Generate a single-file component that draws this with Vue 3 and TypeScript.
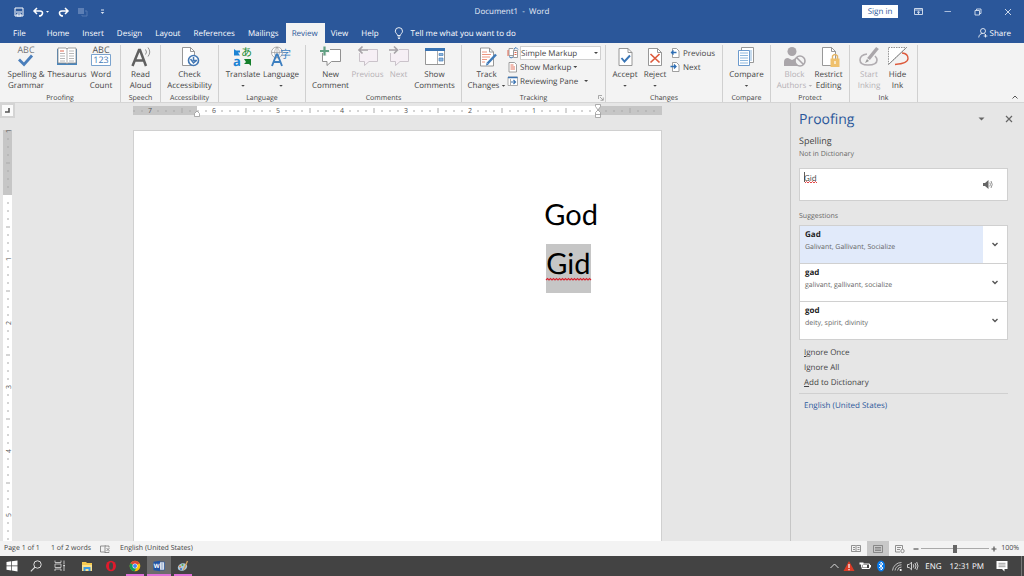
<script setup lang="ts">
import { ref } from 'vue'

const tabs: string[] = ['Home', 'Insert', 'Design', 'Layout', 'References', 'Mailings', 'Review', 'View', 'Help']
const activeTab = ref('Review')
const markup = ref('Simple Markup')
const word = ref('Gid')
const zoom = ref(50)

interface Suggestion {
  term: string
  synonyms: string
}
const suggestions: Suggestion[] = [
  { term: 'Gad', synonyms: 'Galivant, Gallivant, Socialize' },
  { term: 'gad', synonyms: 'galivant, gallivant, socialize' },
  { term: 'god', synonyms: 'deity, spirit, divinity' },
]
const selected = ref(0)

interface Tick {
  at: number
  label: string
  half: boolean
}
// Eighth-inch ticks, 64 units to the inch, counted away from the zero mark.
function makeTicks(zero: number, from: number, to: number): Tick[] {
  const list: Tick[] = []
  for (let at = from; at <= to; at += 8) {
    const n = Math.abs(at - zero)
    list.push({ at, label: n > 0 && n % 64 === 0 ? String(n / 64) : '', half: n % 64 === 32 })
  }
  return list.filter((t) => t.at !== zero)
}
const hTicks = makeTicks(465, 1, 521)
const vTicks = makeTicks(65, 1, 409)
</script>

<template>
  <div class="app">
    <header class="title-bar">
      <div class="quick">
        <button class="q-btn" aria-label="Save">
          <svg width="10" height="10" viewBox="0 0 10 10"><path d="M1 1h8v8H1z" fill="none" stroke="#fff" /><path d="M2 5h6M3 7h4v2H3z" stroke="#fff" fill="none" /></svg>
        </button>
        <button class="q-btn undo" aria-label="Undo">
          <svg width="16" height="10" viewBox="0 0 16 10"><path d="M4 1L1 4l3 3M1.500 4H7c4 0 3 5-1 5" fill="none" stroke="#fff" stroke-width="1.500" /><path d="M13 4h3l-1.500 1.700z" fill="#fff" /></svg>
        </button>
        <button class="q-btn" aria-label="Redo">
          <svg width="11" height="10" viewBox="0 0 11 10"><path d="M7 1l3 3-3 3M9.500 4H4C0 4 1 9 5 9" fill="none" stroke="#fff" stroke-width="1.500" /></svg>
        </button>
        <button class="q-btn" aria-label="Paste">
          <svg width="10" height="10" viewBox="0 0 10 10"><path d="M0 1h6v6H0z" fill="#5d7fb5" /><path d="M7 4h2v5H4V8" fill="none" stroke="#5578b0" /></svg>
        </button>
        <button class="q-btn" aria-label="Customize toolbar">
          <svg width="8" height="6" viewBox="0 0 8 6"><path d="M4 1h3" stroke="#dbe4f2" /><path d="M3.700 3h3.600L5.500 5z" fill="#dbe4f2" /></svg>
        </button>
      </div>
      <div class="doc-title">Document1&nbsp; -&nbsp; Word</div>
      <div class="window-buttons">
        <button class="sign-in">Sign in</button>
        <button class="w-btn" aria-label="Ribbon display options">
          <svg width="9" height="8" viewBox="0 0 9 8"><path d="M.5.5h8v6h-8zM.5 2h8M4.500 6V3.500M3 4.700l1.500-1.400L6 4.700" fill="none" stroke="#dbe4f2" stroke-width=".9" /></svg>
        </button>
        <button class="w-btn" aria-label="Minimize"><svg width="8" height="8" viewBox="0 0 8 8"><path d="M.5 3.500h6.500" stroke="#a9bcdb" /></svg></button>
        <button class="w-btn" aria-label="Restore"><svg width="8" height="8" viewBox="0 0 8 8"><path d="M1 2.500h4.500V7H1zM2.500 2.500V1H7v4.500H5.500" fill="none" stroke="#dbe4f2" stroke-width=".9" /></svg></button>
        <button class="w-btn" aria-label="Close"><svg width="8" height="8" viewBox="0 0 8 8"><path d="M1 1l6 6M7 1L1 7" stroke="#dbe4f2" stroke-width=".9" /></svg></button>
      </div>
    </header>

    <nav class="tabs">
      <button class="tab file">File</button>
      <button v-for="t in tabs" :key="t" class="tab" :class="{ active: t === activeTab }" @click="activeTab = t">{{ t }}</button>
      <button class="tell-me">
        <svg width="10" height="12" viewBox="0 0 10 12"><path d="M3.500 8.500C3.500 7 1.300 6 1.300 4.200a3.600 3.600 0 0 1 7.200 0C8.500 6 6.400 7 6.400 8.500zM3.700 10h2.600M4 11.400h2" fill="none" stroke="#fff" stroke-width=".9" /></svg>
        Tell me what you want to do
      </button>
      <button class="share">
        <svg width="10" height="10" viewBox="0 0 10 10"><circle cx="5" cy="3" r="2.500" fill="none" stroke="#fff" stroke-width=".8" /><path d="M.7 9.500C1 7 2.500 5.500 4.500 5.500M6.500 5.500L7 6.500M7.500 6v3.500M5.700 8h3.700" fill="none" stroke="#fff" stroke-width=".8" /></svg>
        Share
      </button>
    </nav>

    <section class="ribbon" aria-label="Review">
      <div class="group proofing">
        <div class="tools">
          <button class="tool">
            <svg width="22" height="22" viewBox="0 0 22 22"><text x="11" y="7" text-anchor="middle" class="abc" fill="#777">ABC</text><path d="M4 13.500l5 5 8-9" fill="none" stroke="#4a7ebb" stroke-width="2.800" /></svg>
            <span>Spelling &amp;<br />Grammar</span>
          </button>
          <button class="tool">
            <svg width="22" height="22" viewBox="0 0 22 22"><path d="M1 3h20v16H1z" fill="#4a86bd" /><path d="M2 2h8l1 1 1-1h8v15h-8l-1 1-1-1H2z" fill="#fff" stroke="#888" stroke-width=".8" /><path d="M11 3v14" stroke="#999" stroke-width=".8" /><path d="M4 5h4" stroke="#e0654c" /><path d="M4 7.500h5M4 10h5M4 12.500h5M4 15h5M13 5h5M13 7.500h5M13 10h5M13 12.500h5M13 15h5" stroke="#a6a6a6" stroke-width=".8" /></svg>
            <span>Thesaurus</span>
          </button>
          <button class="tool">
            <svg width="22" height="22" viewBox="0 0 22 22"><text x="11" y="7" text-anchor="middle" class="abc" fill="#555">ABC</text><path d="M1.500 8.500h19v11h-19z" fill="#fff" stroke="#7ba3ce" /><text x="11" y="17" text-anchor="middle" class="abc" fill="#3f78b5">123</text></svg>
            <span>Word<br />Count</span>
          </button>
        </div>
        <div class="group-name">Proofing</div>
      </div>

      <div class="group speech">
        <div class="tools">
          <button class="tool">
            <svg width="22" height="22" viewBox="0 0 22 22"><path d="M2.500 20L9 4h1l6 16M5 14.500h8.500" fill="none" stroke="#606060" stroke-width="2.500" /><path d="M15.500 3.500q2 2.500 0 5M18 1.500q3.500 4.500 0 9" fill="none" stroke="#888" stroke-width=".9" /></svg>
            <span>Read<br />Aloud</span>
          </button>
        </div>
        <div class="group-name">Speech</div>
      </div>

      <div class="group access">
        <div class="tools">
          <button class="tool">
            <svg width="22" height="22" viewBox="0 0 22 22"><path d="M4.500 1.500h8l4 4v14h-12z" fill="#fff" stroke="#8c8c8c" stroke-width=".9" /><path d="M12.500 1.500v4h4" fill="none" stroke="#8c8c8c" stroke-width=".9" /><circle cx="15.500" cy="14.500" r="5" fill="#fff" stroke="#4277b3" stroke-width="1.600" /><path d="M15.500 11v3.500h3.500M12.500 13l3 4 3-2.500" fill="none" stroke="#4277b3" stroke-width="1.500" /></svg>
            <span>Check<br />Accessibility</span>
          </button>
        </div>
        <div class="group-name">Accessibility</div>
      </div>

      <div class="group language">
        <div class="tools">
          <button class="tool">
            <svg width="22" height="22" viewBox="0 0 22 22"><text x="1" y="20" class="glyph-a" fill="#1c83d4">a</text><text x="9" y="10" class="cjk" fill="#138a2e">あ</text><path d="M2 3l2 1.500h4v2H6l2 3H2z" fill="#1c83d4" /><path d="M12 13h7v7l-2-2h-5l2-2z" fill="#16802c" /></svg>
            <span>Translate<br /><i class="caret"></i></span>
          </button>
          <button class="tool">
            <svg width="22" height="22" viewBox="0 0 22 22"><circle cx="7" cy="6.500" r="5.500" fill="#fff" stroke="#999" stroke-width=".8" /><path d="M1.500 6.500h11M7 1v11M7 1q-5 5.500 0 11M7 1q5 5.500 0 11" fill="none" stroke="#999" stroke-width=".7" /><path d="M2 20L6.500 8.500h1L12 20M4 16h6" fill="none" stroke="#3d7fc0" stroke-width="1.900" /><text x="10" y="12" class="cjk" fill="#3d7fc0">字</text></svg>
            <span>Language<br /><i class="caret"></i></span>
          </button>
        </div>
        <div class="group-name">Language</div>
      </div>

      <div class="group comments">
        <div class="tools">
          <button class="tool">
            <svg width="22" height="22" viewBox="0 0 22 22"><path d="M2.500 3.500h18v12h-9L7 19.500v-4H2.500z" fill="#fff" stroke="#858585" stroke-width=".9" /><path d="M0 5h10M5 0v10" stroke="#f3f3f3" stroke-width="4" /><path d="M0 5h9M4.500 .5v9" stroke="#62a083" stroke-width="2.200" /></svg>
            <span>New<br />Comment</span>
          </button>
          <button class="tool" disabled>
            <svg width="22" height="22" viewBox="0 0 22 22"><path d="M2.500 3.500h18v12H12l-4.500 4v-4h-5z" fill="#f6eff5" stroke="#c5bdc5" stroke-width=".9" /><path d="M0 4h11" stroke="#f3f3f3" stroke-width="6" /><path d="M11 4H2M5.500 .5L2 4l3.500 3.500" fill="none" stroke="#a8a3a8" stroke-width="1.700" /></svg>
            <span>Previous</span>
          </button>
          <button class="tool" disabled>
            <svg width="22" height="22" viewBox="0 0 22 22"><path d="M2.500 3.500h18v12H12l-4.500 4v-4h-5z" fill="#f6eff5" stroke="#c5bdc5" stroke-width=".9" /><path d="M0 4h11" stroke="#f3f3f3" stroke-width="6" /><path d="M1 4h9M6 .5L9.500 4 6 7.500" fill="none" stroke="#a8a3a8" stroke-width="1.700" /></svg>
            <span>Next</span>
          </button>
          <button class="tool">
            <svg width="22" height="22" viewBox="0 0 22 22"><path d="M1.500 2.500h19v16h-19z" fill="#fff" stroke="#8a8a8a" stroke-width=".9" /><path d="M1 2h20v3H1z" fill="#3a73b2" /><path d="M13.500 5v13" stroke="#999" stroke-width=".8" /><path d="M15 7.500h4v2h-4zM15 12h4v3h-4z" fill="#8db5dc" stroke="#4a82bd" stroke-width=".7" /></svg>
            <span>Show<br />Comments</span>
          </button>
        </div>
        <div class="group-name">Comments</div>
      </div>

      <div class="group tracking">
        <div class="tools">
          <button class="tool">
            <svg width="22" height="22" viewBox="0 0 22 22"><path d="M4.500 2h9l4 4v14h-13z" fill="#fff" stroke="#8c8c8c" stroke-width=".9" /><path d="M13.500 2v4h4" fill="none" stroke="#8c8c8c" stroke-width=".9" /><path d="M6 6h5M6 8.500h9M6 11h8M6 13.500h5M6 16h3" stroke="#ec8a72" stroke-width=".9" /><path d="M20 8.500l-8.500 9" stroke="#3f7ab8" stroke-width="2.500" /><path d="M10 19.500l.6-2.800 2 2z" fill="#3f7ab8" /></svg>
            <span>Track<br />Changes <i class="caret"></i></span>
          </button>
          <div class="stack">
            <div class="row combo">
              <svg width="12" height="12" viewBox="0 0 12 12"><path d="M2 1.500h4l1 1v6H2z" fill="#fff" stroke="#888" stroke-width=".8" /><path d="M6.500 3.500h4v7h-4z" fill="#fff" stroke="#888" stroke-width=".8" /><path d="M1 3v6M7.500 5.500h2M7.500 7.500h2" stroke="#e0654c" /><path d="M7 2l2-1.500 2 2M2 9.500l2 1.500 2-1" fill="none" stroke="#3f7ab8" /></svg>
              <select v-model="markup" aria-label="Display for review">
                <option>Simple Markup</option>
                <option>All Markup</option>
              </select>
              <i class="caret over"></i>
            </div>
            <button class="row">
              <svg width="12" height="12" viewBox="0 0 12 12"><path d="M2 1.500h5.500l2 2v7.500H2z" fill="#fff" stroke="#888" stroke-width=".8" /><path d="M3.500 4h3M3.500 6h4.500M3.500 8h4.500" stroke="#e0654c" stroke-width=".9" /></svg>
              Show Markup<i class="caret"></i>
            </button>
            <button class="row">
              <svg width="12" height="12" viewBox="0 0 12 12"><path d="M1 2h9.500v8.500H1z" fill="#fff" stroke="#999" stroke-width=".8" /><path d="M1 2.500h9.500" stroke="#3a73b2" stroke-width="1.500" /><path d="M3.500 4v6" stroke="#888" stroke-width=".7" /><path d="M4 7h4.500M6.500 5l2 2-2 2" fill="none" stroke="#3a73b2" stroke-width="1.200" /></svg>
              Reviewing Pane<i class="caret far"></i>
            </button>
          </div>
        </div>
        <div class="group-name">Tracking</div>
        <button class="launcher" aria-label="Tracking options"><svg width="6" height="6" viewBox="0 0 6 6"><path d="M.5 4V.5H4M2 2l3 3M5.300 2.500v2.800H2.500" fill="none" stroke="#888" stroke-width=".7" /></svg></button>
      </div>

      <div class="group changes">
        <div class="tools">
          <button class="tool">
            <svg width="22" height="22" viewBox="0 0 22 22"><path d="M5 2.500h9l4 4v13H5z" fill="#fff" stroke="#8c8c8c" stroke-width=".9" /><path d="M14 2.500v4h4" fill="none" stroke="#8c8c8c" stroke-width=".9" /><path d="M7.500 12l3 3.500 5.500-6" fill="none" stroke="#3a76b6" stroke-width="1.900" /></svg>
            <span>Accept<br /><i class="caret"></i></span>
          </button>
          <button class="tool">
            <svg width="22" height="22" viewBox="0 0 22 22"><path d="M4.500 2.500h9l4 4v13h-13z" fill="#fff" stroke="#8c8c8c" stroke-width=".9" /><path d="M13.500 2.500v4h4" fill="none" stroke="#8c8c8c" stroke-width=".9" /><path d="M6.500 8l9 8.500M15.500 8l-9 8.500" fill="none" stroke="#dd5a3c" stroke-width="1.700" /></svg>
            <span>Reject<br /><i class="caret"></i></span>
          </button>
          <div class="stack">
            <button class="row">
              <svg width="12" height="12" viewBox="0 0 12 12"><path d="M2.500 1.500h4l2.500 2.500v6.500H2.500z" fill="#fff" stroke="#888" stroke-width=".8" /><path d="M6.500 5.500H1.500M3.500 3.500l-2 2 2 2" fill="none" stroke="#2f6fb5" stroke-width="1.300" /></svg>
              Previous
            </button>
            <button class="row">
              <svg width="12" height="12" viewBox="0 0 12 12"><path d="M2.500 1.500h4l2.500 2.500v6.500H2.500z" fill="#fff" stroke="#888" stroke-width=".8" /><path d="M.5 5.500h5.500M4 3.500l2 2-2 2" fill="none" stroke="#2f6fb5" stroke-width="1.300" /></svg>
              Next
            </button>
          </div>
        </div>
        <div class="group-name">Changes</div>
      </div>

      <div class="group compare">
        <div class="tools">
          <button class="tool">
            <svg width="22" height="22" viewBox="0 0 22 22"><path d="M6.500 1.500h12v15h-12z" fill="#fff" stroke="#8c8c8c" stroke-width=".9" /><path d="M3.500 4.500h11v15h-11z" fill="#fff" stroke="#5b8fc7" stroke-width=".9" /><path d="M5 7h8M5 9.500h8M5 12h8M5 14.500h8M5 17h8M16 4v11" stroke="#8fb8de" stroke-width="1" /></svg>
            <span>Compare<br /><i class="caret"></i></span>
          </button>
        </div>
        <div class="group-name">Compare</div>
      </div>

      <div class="group protect">
        <div class="tools">
          <button class="tool" disabled>
            <svg width="22" height="22" viewBox="0 0 22 22"><circle cx="8" cy="5.500" r="4.500" fill="#aaa6aa" /><path d="M0 20v-4q0-4 4-4l4 2 4-2q3 0 3 3v5z" fill="#aaa6aa" /><circle cx="16" cy="15" r="5" fill="#f3f3f3" stroke="#aaa6aa" stroke-width="1.600" /><path d="M12.500 11.500l7 7" stroke="#aaa6aa" stroke-width="1.600" /></svg>
            <span>Block<br />Authors <i class="caret"></i></span>
          </button>
          <button class="tool">
            <svg width="22" height="22" viewBox="0 0 22 22"><path d="M4.500 1.500h9l4 4v14h-13z" fill="#fff" stroke="#8c8c8c" stroke-width=".9" /><path d="M13.500 1.500v4h4" fill="none" stroke="#8c8c8c" stroke-width=".9" /><path d="M14.500 13v-3q2.500-3 5 0v3" fill="none" stroke="#e5b564" stroke-width="1.400" /><path d="M12.500 12.500h9V21h-9z" fill="#efc06c" /><path d="M17 15v3" stroke="#fff" stroke-width="1.200" /></svg>
            <span>Restrict<br />Editing</span>
          </button>
        </div>
        <div class="group-name">Protect</div>
      </div>

      <div class="group ink">
        <div class="tools">
          <button class="tool" disabled>
            <svg width="22" height="22" viewBox="0 0 22 22"><path d="M9 8Q2 9 2 14q0 5 8 5 9 0 9-5 0-2-2-4" fill="none" stroke="#b0acb0" stroke-width="1.600" /><path d="M19.500 2l-9 11" stroke="#aaa6aa" stroke-width="3.500" /><path d="M7 17l2-4 2 2z" fill="#999" /></svg>
            <span>Start<br />Inking</span>
          </button>
          <button class="tool">
            <svg width="22" height="22" viewBox="0 0 22 22"><path d="M1.500 1.500h18l-18 17z" fill="#fff" stroke="#777" stroke-width=".8" stroke-dasharray="1.500 1" /><path d="M19.500 1.500l-18 17" stroke="#777" stroke-width=".8" /><path d="M15 7q6 .5 6 5.500 0 5-13 6" fill="none" stroke="#dd5a3c" stroke-width="1.400" /></svg>
            <span>Hide<br />Ink</span>
          </button>
        </div>
        <div class="group-name">Ink</div>
      </div>
      <button class="collapse" aria-label="Collapse ribbon"><svg width="6" height="4" viewBox="0 0 6 4"><path d="M.5 3.500L3 1l2.500 2.500" fill="none" stroke="#555" /></svg></button>
    </section>

    <div class="work">
      <main class="editor">
        <div class="ruler-row">
          <button class="tab-stop" aria-label="Tab stop"><svg width="5" height="5" viewBox="0 0 5 5"><path d="M4 0v4H0" fill="none" stroke="#555" stroke-width="1.600" /></svg></button>
          <svg class="h-ruler" width="529" height="15" viewBox="0 0 529 15">
            <path d="M0 3h529v9H0z" fill="#c6c6c6" />
            <path d="M64 3h401v9H64z" fill="#fff" />
            <template v-for="t in hTicks" :key="t.at">
              <text v-if="t.label" :x="t.at" y="10" text-anchor="middle" class="num">{{ t.label }}</text>
              <path v-else :d="`M${t.at} ${t.half ? 5 : 7}v${t.half ? 5 : 2}`" stroke="#aaa" />
            </template>
            <path d="M61.500 13.500v-3L64 8l2.500 2.500v3zM462.500 3.500v-2h5v2L465 7zM462.500 9.500L465 7l2.500 2.500v5h-5zM462.500 11.500h5" fill="#fff" stroke="#999" stroke-width=".8" />
          </svg>
        </div>
        <div class="canvas">
          <svg class="v-ruler" width="9" height="411" viewBox="0 0 9 411">
            <path d="M0 0h9v411H0z" fill="#fff" />
            <path d="M0 0h9v65H0z" fill="#c6c6c6" />
            <template v-for="t in vTicks" :key="t.at">
              <text v-if="t.label" :transform="`translate(8 ${t.at}) rotate(-90)`" text-anchor="middle" class="num">{{ t.label }}</text>
              <path v-else :d="`M${t.half ? 3 : 4} ${t.at}h${t.half ? 4 : 2}`" stroke="#aaa" />
            </template>
          </svg>
          <article class="page">
            <p>God</p>
            <p><span class="picked">Gid<svg class="squiggle" width="45" height="3" viewBox="0 0 45 3"><path d="M0 2l1.500-1.500L3 2l1.500-1.500L6 2l1.500-1.500L9 2l1.500-1.500L12 2l1.500-1.500L15 2l1.500-1.500L18 2l1.500-1.500L21 2l1.500-1.500L24 2l1.500-1.500L27 2l1.500-1.500L30 2l1.500-1.500L33 2l1.500-1.500L36 2l1.500-1.500L39 2l1.500-1.500L42 2l1.500-1.500L45 2" fill="none" stroke="#d8232f" stroke-width="1.100" /></svg></span>&nbsp;</p>
          </article>
        </div>
      </main>

      <aside class="pane">
        <div class="pane-head">
          <h2>Proofing</h2>
          <button aria-label="Pane options"><svg width="7" height="4" viewBox="0 0 7 4"><path d="M.5.5h6l-3 3z" fill="#666" /></svg></button>
          <button aria-label="Close pane"><svg width="8" height="8" viewBox="0 0 8 8"><path d="M1 1l6 6M7 1L1 7" stroke="#666" stroke-width="1.200" /></svg></button>
        </div>
        <h3>Spelling</h3>
        <label class="hint" for="word">Not in Dictionary</label>
        <div class="word-box">
          <div class="word-field">
            <input id="word" v-model="word" type="text" />
            <svg class="word-mark" width="13" height="12" viewBox="0 0 13 12"><path d="M.5 0v10" stroke="#333" stroke-width=".8" /><path d="M1 11l1.500-1.500L4 11l1.500-1.500L7 11l1.500-1.500L10 11l1.500-1.500L13 11" fill="none" stroke="#e03030" stroke-width=".9" /></svg>
          </div>
          <button class="speak" aria-label="Read word aloud"><svg width="11" height="9" viewBox="0 0 11 9"><path d="M0 3h2l3.500-3v9L2 6H0z" fill="#666" /><path d="M6.800 2.500q1.200 2 0 4M8 1q2.500 3.500 0 7" fill="none" stroke="#888" stroke-width=".9" /></svg></button>
        </div>
        <div class="hint">Suggestions</div>
        <ul class="suggestions">
          <li v-for="(s, i) in suggestions" :key="s.term" :class="{ on: i === selected }">
            <button class="pick" @click="selected = i"><b>{{ s.term }}</b><span>{{ s.synonyms }}</span></button>
            <button class="more" :aria-label="`More for ${s.term}`"><svg width="6" height="5" viewBox="0 0 6 5"><path d="M.5 1L3 3.500 5.500 1" fill="none" stroke="#555" stroke-width="1.400" /></svg></button>
          </li>
        </ul>
        <div class="actions">
          <button><u>I</u>gnore Once</button>
          <button>I<u>g</u>nore All</button>
          <button><u>A</u>dd to Dictionary</button>
        </div>
        <a class="lang" href="#language">English (United States)</a>
      </aside>
    </div>

    <footer class="status">
      <span class="pages">Page 1 of 1</span>
      <span class="words">1 of 2 words</span>
      <svg class="book" width="10" height="8" viewBox="0 0 10 8"><path d="M4.500 1H.5v6h4l.5.700V.500zM5 1h4v1.500M5 7.500h4V6.500M6.500 3l3 3M9.500 3l-3 3" fill="none" stroke="#777" stroke-width=".8" /></svg>
      <span>English (United States)</span>
      <div class="views">
        <button aria-label="Read mode"><svg width="10" height="8" viewBox="0 0 10 8"><path d="M.5.500h4l.5.500.5-.500h4v6h-4L5 7l-.5-.500h-4zM5 1v6M2 2.500h2M2 4.500h2M6.500 2.500h2M6.500 4.500h2" fill="none" stroke="#777" stroke-width=".8" /></svg></button>
        <button class="on" aria-label="Print layout"><svg width="10" height="8" viewBox="0 0 10 8"><path d="M.5.500h9v7h-9zM2 2.500h6M2 4h6M2 5.500h6" fill="none" stroke="#777" stroke-width=".8" /></svg></button>
        <button aria-label="Web layout"><svg width="10" height="8" viewBox="0 0 10 8"><path d="M5 7H.5V.500h7V4M2 2.500h4M2 4.500h3" fill="none" stroke="#777" stroke-width=".8" /><circle cx="7.500" cy="6" r="1.700" fill="none" stroke="#777" stroke-width=".8" /></svg></button>
      </div>
      <button class="zoom-btn" aria-label="Zoom out"><svg width="6" height="6" viewBox="0 0 6 6"><path d="M.5 3h5" stroke="#555" stroke-width="1.200" /></svg></button>
      <input v-model="zoom" class="zoom" type="range" min="0" max="100" aria-label="Zoom" />
      <button class="zoom-btn" aria-label="Zoom in"><svg width="6" height="6" viewBox="0 0 6 6"><path d="M.5 3h5M3 .5v5" stroke="#555" stroke-width="1.200" /></svg></button>
      <span class="percent">100%</span>
    </footer>

    <div class="taskbar">
      <button aria-label="Start"><svg width="12" height="12" viewBox="0 0 12 12"><path d="M.5 2l4.700-.700v4.200H.5zM5.900 1.200L11.500.500v5H5.900zM.5 6.200h4.700v4.300L.5 9.800zM5.900 6.200h5.600v5.200l-5.600-.800z" fill="#fff" /></svg></button>
      <button aria-label="Search"><svg width="12" height="12" viewBox="0 0 12 12"><circle cx="7.500" cy="4.500" r="3.700" fill="none" stroke="#ddd" /><path d="M5 7.200L.8 11.400" stroke="#ddd" stroke-width="1.200" /></svg></button>
      <button aria-label="Task view"><svg width="12" height="12" viewBox="0 0 12 12"><path d="M1 .5v2h6v-2M1 11V9h6v2M1 4h6v3.500H1zM10 .5v4M10 7v4" fill="none" stroke="#ccc" stroke-width=".9" /><path d="M9.300 5h1.500v1.500H9.300z" fill="#fff" /></svg></button>
      <button class="first-app" aria-label="File Explorer"><svg width="12" height="10" viewBox="0 0 12 10"><path d="M1 1h4l1 1h5v8H1z" fill="#f5c94f" /><path d="M1 4h10v6H1z" fill="#fbe08c" /><path d="M2.500 6h7v4h-2V8h-3v2h-2z" fill="#3e9adf" /></svg></button>
      <button aria-label="Opera"><svg width="12" height="12" viewBox="0 0 12 12"><ellipse cx="6" cy="6" rx="5" ry="5.200" fill="#e01b2c" /><ellipse cx="6" cy="6" rx="2" ry="3.700" fill="#444" /></svg></button>
      <button class="open" aria-label="Chrome"><svg width="12" height="12" viewBox="0 0 12 12"><circle cx="6" cy="6" r="5.300" fill="#f4c20d" /><path d="M6 6L1.400 3.300A5.300 5.300 0 0 1 10.600 3.300z" fill="#db4437" /><path d="M6 6L1.400 3.300A5.300 5.300 0 0 0 5.500 11.300L8 7z" fill="#109d58" /><circle cx="6" cy="6" r="2.500" fill="#fff" /><circle cx="6" cy="6" r="2" fill="#4285f4" /></svg></button>
      <button class="open current" aria-label="Word"><svg width="12" height="12" viewBox="0 0 12 12"><path d="M6 2h5.500v8H6z" fill="#fff" stroke="#2b579a" stroke-width=".8" /><path d="M7.500 4h3M7.500 6h3M7.500 8h3" stroke="#2b579a" stroke-width=".7" /><path d="M.5 1.700L7 .7v10.600L.5 10.300z" fill="#1f54a5" /><text x="3.700" y="8" text-anchor="middle" class="w-mark" fill="#fff">W</text></svg></button>
      <button class="open" aria-label="Paint"><svg width="12" height="12" viewBox="0 0 12 12"><ellipse cx="5.500" cy="7" rx="4.800" ry="3.700" fill="#a9c9de" transform="rotate(-20 5.500 7)" /><circle cx="3" cy="6.500" r="1" fill="#e8823a" /><circle cx="5.500" cy="5" r="1" fill="#5aa845" /><circle cx="4" cy="9" r="1" fill="#3b68b8" /><path d="M10.500 1L6.500 10" stroke="#d2a15a" stroke-width="1.300" /></svg></button>

      <div class="tray">
        <svg width="9" height="12" viewBox="0 0 9 12"><path d="M.5 8l4-4 4 4" fill="none" stroke="#ddd" /></svg>
        <svg width="12" height="12" viewBox="0 0 12 12"><path d="M6 1l5.500 10H.5z" fill="#dc3b26" /><path d="M6 4v4M6 9v1.300" stroke="#fff" stroke-width="1.200" /></svg>
        <svg width="12" height="12" viewBox="0 0 12 12"><path d="M3 4h7.500v4.500H3zM11.500 5v2.500" fill="none" stroke="#fff" /><path d="M4 5h4v2.500H4zM.5 2.500h4v2h-4z" fill="#fff" /><path d="M2.500 4v3" stroke="#fff" stroke-width=".8" /></svg>
        <svg width="12" height="12" viewBox="0 0 12 12"><ellipse cx="6" cy="6" rx="4" ry="5.500" fill="#0a7bea" /><path d="M4 4l4 4-2 2V2l2 2-4 4" fill="none" stroke="#fff" stroke-width=".9" /></svg>
        <svg width="12" height="12" viewBox="0 0 12 12"><path d="M1.500 10.500a9 9 0 0 1 9-8M4 10.500a6.500 6.500 0 0 1 6.500-5.700M6.500 10.500A4 4 0 0 1 10.500 7" fill="none" stroke="#ccc" stroke-width=".9" /><circle cx="9.700" cy="10" r="1.100" fill="#fff" /></svg>
        <svg width="12" height="12" viewBox="0 0 12 12"><path d="M.5 4.500h1.700l2.300-2.300v7.600L2.200 7.500H.5zM6.300 4.300q1 1.700 0 3.400M8 3q2 3 0 6M9.700 2q2.600 4 0 8" fill="none" stroke="#ddd" stroke-width=".9" /></svg>
        <span class="eng">ENG</span>
        <time>12:31 PM</time>
        <svg class="notice" width="12" height="12" viewBox="0 0 12 12"><path d="M.5 1h11v8H8.500v2.500L6 9H.5z" fill="#fff" /><path d="M2.500 3.300h7M2.500 5h7M2.500 6.700h7" stroke="#777" stroke-width=".7" /></svg>
        <i class="peek"></i>
      </div>
    </div>
  </div>
</template>

<style>
body {
  margin: 0;
}
</style>

<style scoped>
* {
  box-sizing: border-box;
}
.app {
  display: flex;
  flex-direction: column;
  height: 100vh;
  overflow: hidden;
  font: 8px/11px "Open Sans", "Noto Sans", sans-serif;
  text-rendering: geometricPrecision;
  color: #444;
  background: #e6e6e6;
}
button,
input,
select {
  font: inherit;
  text-rendering: inherit;
  color: inherit;
  background: none;
  border: 0;
  padding: 0;
  margin: 0;
}
svg {
  display: block;
  flex: none;
  overflow: visible;
}

.title-bar {
  display: grid;
  grid-template-columns: 1fr auto 1fr;
  align-items: center;
  height: 23px;
  background: #2b579a;
  color: #fff;
}
.quick {
  display: flex;
  align-items: center;
  gap: 9px;
  padding-left: 14px;
}
.doc-title {
  color: #e6edf7;
}
.window-buttons {
  display: flex;
  justify-content: flex-end;
  align-items: center;
  padding-right: 1px;
}
.sign-in {
  width: 36px;
  height: 13px;
  margin-right: 5px;
  background: #fff;
  color: #2b579a;
}
.w-btn {
  display: flex;
  justify-content: center;
  width: 30px;
}

.tabs {
  display: flex;
  height: 20px;
  background: #2b579a;
  color: #fff;
}
.tab {
  padding: 0 7px 0 6px;
}
.file {
  padding: 0 15px 0 13px;
}
.tab.active {
  background: #f3f3f3;
  color: #2b579a;
}
.tell-me {
  display: flex;
  align-items: center;
  gap: 7px;
  margin-left: 8px;
}
.share {
  display: flex;
  align-items: center;
  gap: 2px;
  margin-left: auto;
  padding-right: 13px;
}

.ribbon {
  display: flex;
  height: 60px;
  background: #f3f3f3;
  border-bottom: 1px solid #d5d5d5;
}
.group {
  position: relative;
  display: flex;
  flex-direction: column;
  justify-content: space-between;
  margin-top: 2px;
  border-right: 1px solid #d0d0d0;
}
.tools {
  display: grid;
  justify-content: center;
  padding-top: 1px;
}
.proofing { width: 121px; }
.proofing .tools { grid-template-columns: 42px 40px 28px; }
.speech { width: 40px; }
.access { width: 58px; }
.language { width: 87px; }
.language .tools { grid-template-columns: 38px 38px; }
.comments { width: 156px; }
.comments .tools { grid-template-columns: 40px 34px 28px 44px; }
.tracking { width: 144px; }
.tracking .tools { grid-template-columns: 41px 94px; }
.changes { width: 117px; }
.changes .tools { grid-template-columns: 30px 30px 48px; }
.compare { width: 48px; }
.protect { width: 79px; }
.protect .tools { grid-template-columns: 37px 31px; }
.ink { width: 68px; }
.ink .tools { grid-template-columns: 28px 29px; }
.tool {
  display: flex;
  flex-direction: column;
  align-items: center;
  gap: 1px;
  white-space: nowrap;
}
.tool:disabled {
  color: #b5b1b5;
}
.group-name {
  text-align: center;
  font-size: 7px;
  line-height: 7px;
}
.caret {
  display: inline-block;
  width: 4px;
  height: 2px;
  background: currentColor;
  clip-path: polygon(0 0, 100% 0, 50% 100%);
  vertical-align: middle;
}
.stack {
  display: flex;
  flex-direction: column;
}
.row {
  position: relative;
  display: flex;
  align-items: center;
  gap: 1px;
  height: 14px;
  white-space: nowrap;
}
.row .caret {
  margin-left: 1px;
}
.row .far {
  margin-left: 5px;
}
.combo select {
  flex: 1;
  height: 14px;
  appearance: none;
  background: #fff;
  border: 1px solid #d0d0d0;
}
.row .over {
  position: absolute;
  right: 3px;
}
.launcher {
  position: absolute;
  right: 1px;
  bottom: 1px;
}
.collapse {
  align-self: flex-end;
  margin-left: auto;
  padding: 0 6px 3px;
}
.abc { font: 9px "Open Sans", sans-serif; }
.glyph-a { font: bold 13px "Open Sans", sans-serif; }
.cjk { font: 11px "Noto Sans CJK JP", sans-serif; }
.num { font: 7px "Open Sans", sans-serif; fill: #555; }
.w-mark { font: bold 6px "Open Sans", sans-serif; }

.work {
  display: flex;
  flex: 1;
  min-height: 0;
}
.editor {
  display: flex;
  flex-direction: column;
  flex: 1;
  min-width: 0;
}
.ruler-row {
  display: flex;
  padding-right: 10px;
}
.tab-stop {
  display: grid;
  place-items: center;
  width: 15px;
  height: 15px;
  background: #fafafa;
  border: 2px solid #d4d4d4;
}
.h-ruler {
  margin: 0 auto;
}
.canvas {
  display: flex;
  flex: 1;
  min-height: 0;
  padding: 12px 7px 0 3px;
  overflow: hidden;
}
.page {
  width: 529px;
  margin: 0 auto;
  padding: 64px 63px 0;
  background: #fff;
  border: 1px solid #d0d0d0;
  border-bottom: 0;
  color: #000;
  font: 29px/39px Lato, sans-serif;
  text-align: right;
}
.page p {
  margin: 0 0 10px;
  height: 39px;
}
.picked {
  position: relative;
  display: inline-block;
  padding-bottom: 10px;
  background: #c6c6c6;
}
.squiggle {
  position: absolute;
  left: 0;
  top: 34px;
}

.pane {
  width: 234px;
  padding: 4px 16px 0 8px;
  border-left: 1px solid #c6c6c6;
}
.pane-head {
  display: flex;
  align-items: center;
  height: 24px;
  gap: 20px;
  margin-right: -5px;
}
h2 {
  flex: 1;
  margin: 0;
  font-size: 14px;
  font-weight: 400;
  color: #2b579a;
}
h3 {
  margin: 3px 0;
  font-size: 9px;
  line-height: 13px;
  font-weight: 400;
}
.hint {
  display: block;
  font-size: 7px;
  line-height: 9px;
  color: #666;
}
.word-box {
  display: flex;
  align-items: center;
  justify-content: space-between;
  height: 33px;
  margin: 9px 0 11px;
  padding: 3px 13px 3px 4px;
  background: #fff;
  border: 1px solid #d0d0d0;
}
.word-field {
  position: relative;
  flex: 1;
  align-self: flex-start;
}
.word-field input {
  display: block;
  width: 100%;
  height: 12px;
}
.word-mark {
  position: absolute;
  left: 0;
  top: 0;
}
.suggestions {
  list-style: none;
  margin: 4px 0 0;
  padding: 0;
  background: #fff;
  border: 1px solid #d0d0d0;
}
li {
  display: flex;
  height: 37px;
}
li + li {
  height: 38px;
  border-top: 1px solid #d0d0d0;
}
.pick {
  display: flex;
  flex-direction: column;
  flex: 1;
  padding: 2px 0 0 5px;
  text-align: left;
}
.on .pick {
  background: #e1eafa;
}
.pick b {
  color: #222;
  line-height: 14px;
}
.pick span {
  font-size: 7px;
  color: #666;
}
.more {
  display: grid;
  place-items: center;
  width: 24px;
}
.actions {
  display: flex;
  flex-direction: column;
  align-items: flex-start;
  padding: 5px 5px 3px;
  border-bottom: 1px solid #d0d0d0;
}
.actions button {
  line-height: 15px;
}
.lang {
  display: block;
  padding: 6px 5px;
  color: #2b579a;
  text-decoration: none;
}

.status {
  display: flex;
  align-items: center;
  height: 15px;
  padding: 0 5px 0 4px;
  background: #f3f3f3;
  font-size: 7px;
}
.pages {
  width: 47px;
}
.words {
  width: 49px;
}
.book {
  margin-right: 10px;
}
.views {
  display: flex;
  align-self: stretch;
  margin-left: auto;
}
.views button {
  display: grid;
  place-items: center;
  width: 22px;
}
.views .on {
  background: #c8c8c8;
}
.zoom-btn {
  margin-left: 2px;
}
.zoom {
  appearance: none;
  width: 68px;
  height: 9px;
  margin: 0 0 0 2px;
  background: linear-gradient(#aaa, #aaa) center / 100% 1px no-repeat;
}
.zoom::-webkit-slider-thumb {
  appearance: none;
  width: 4px;
  height: 8px;
  background: #666;
}
.percent {
  width: 22px;
  text-align: right;
}

.taskbar {
  display: flex;
  height: 20px;
  background: #434343;
  color: #fff;
}
.taskbar button {
  display: grid;
  place-items: center;
  width: 24px;
}
.taskbar .first-app {
  margin-left: 3px;
}
.taskbar .open {
  background: linear-gradient(#e070d8, #e070d8) bottom / 18px 2px no-repeat;
}
.taskbar .current {
  background: linear-gradient(#e070d8, #e070d8) bottom / 24px 2px no-repeat #6c6c6c;
}
.tray {
  display: flex;
  align-items: center;
  gap: 4px;
  margin-left: auto;
}
.eng {
  margin-left: 2px;
}
time {
  margin: 0 8px 0 4px;
}
.peek {
  width: 1px;
  height: 20px;
  margin: 0 2px 0 9px;
  background: #777;
}
</style>
